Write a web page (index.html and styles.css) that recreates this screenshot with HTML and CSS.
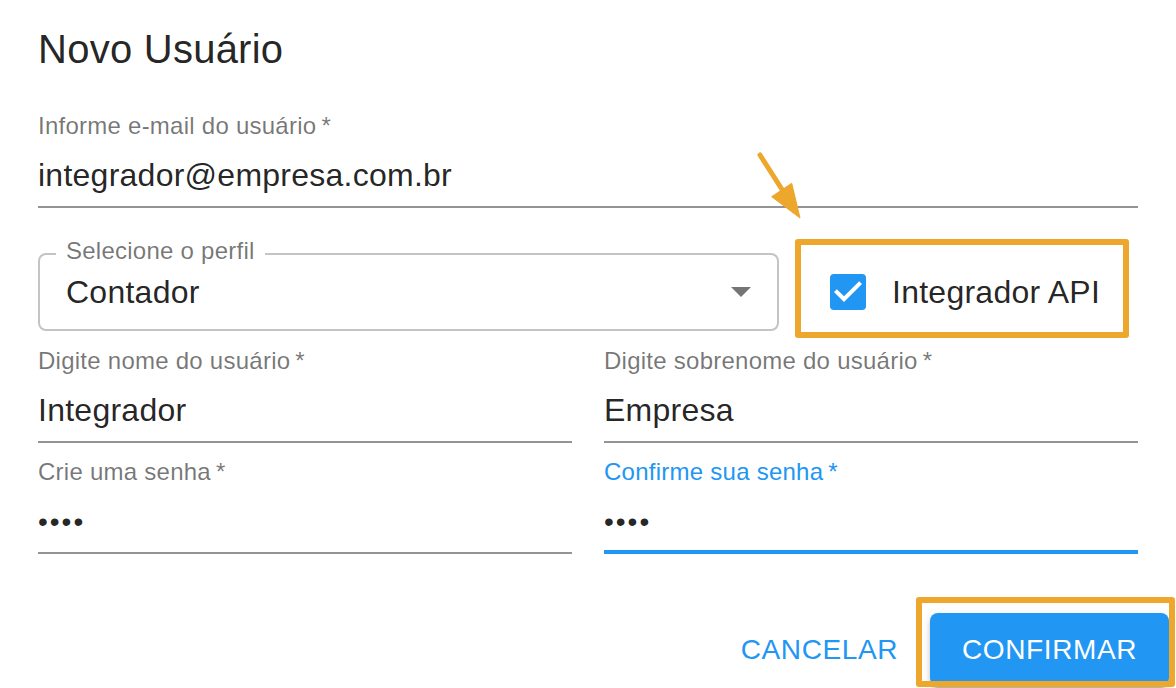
FILE: index.html
```html
<!DOCTYPE html>
<html lang="pt-BR">
<head>
<meta charset="utf-8">
<title>Novo Usuário</title>
<link rel="stylesheet" href="styles.css">
</head>
<body>
<div class="dialog">
  <svg class="arrow" viewBox="0 0 56 76" width="56" height="76" aria-hidden="true">
    <line x1="8" y1="7" x2="31" y2="43" stroke="#eca72c" stroke-width="5" stroke-linecap="round"/>
    <polygon points="48,70 19.7,48.7 39.7,35.3" fill="#eca72c" stroke="#eca72c" stroke-width="1" stroke-linejoin="round"/>
  </svg>

  <h2 class="title">Novo Usuário</h2>

  <div class="field field-email">
    <span class="field-label">Informe e-mail do usuário&thinsp;*</span>
    <span class="field-value">integrador@empresa.com.br</span>
  </div>

  <div class="select-row">
    <div class="select">
      <span class="select-label">Selecione o perfil</span>
      <span class="select-value">Contador</span>
      <svg class="caret" viewBox="0 0 20 10" width="20" height="10" aria-hidden="true"><path d="M0 0 L10 10 L20 0 Z" fill="#757575"/></svg>
    </div>
    <div class="api-check">
      <svg class="checkbox" viewBox="3 3 18 18" width="36" height="36" aria-hidden="true">
        <rect x="3" y="3" width="18" height="18" rx="2" fill="#2196f3"/>
        <path d="M10 17l-5-5 1.41-1.41L10 14.17l7.59-7.59L19 8l-9 9z" fill="#fff"/>
      </svg>
      <span class="check-label">Integrador API</span>
    </div>
  </div>

  <div class="grid">
    <div class="field">
      <span class="field-label">Digite nome do usuário&thinsp;*</span>
      <span class="field-value">Integrador</span>
    </div>
    <div class="field">
      <span class="field-label">Digite sobrenome do usuário&thinsp;*</span>
      <span class="field-value">Empresa</span>
    </div>
    <div class="field">
      <span class="field-label">Crie uma senha&thinsp;*</span>
      <span class="field-value"><span class="dots">••••</span></span>
    </div>
    <div class="field focused">
      <span class="field-label">Confirme sua senha&thinsp;*</span>
      <span class="field-value"><span class="dots">••••</span></span>
    </div>
  </div>

  <div class="actions">
    <button class="btn btn-text" type="button">Cancelar</button>
    <div class="btn-primary-wrap">
      <button class="btn btn-primary" type="button">Confirmar</button>
    </div>
  </div>
</div>
</body>
</html>
```

FILE: styles.css
```css
html, body {
  margin: 0;
  height: 100%;
  overflow: hidden;
  background: #fff;
}

body {
  font-family: "Liberation Sans", Arial, Helvetica, sans-serif;
  color: rgba(0, 0, 0, 0.87);
  letter-spacing: 0.25px;
}

.dialog {
  position: relative;
  width: 1176px;
  box-sizing: border-box;
  padding: 25px 38px 0 38px;
}

.arrow {
  position: absolute;
  left: 752px;
  top: 148px;
}

.title {
  margin: 0;
  font-size: 40px;
  line-height: 48px;
  font-weight: 400;
}

.field {
  display: flex;
  flex-direction: column;
  border-bottom: 2px solid #949494;
  padding-bottom: 12px;
}

.field-email {
  margin-top: 41px;
}

.field-label {
  font-size: 24px;
  line-height: 24px;
  color: rgba(0, 0, 0, 0.54);
  white-space: nowrap;
}

.field-value {
  margin-top: 18px;
  font-size: 32px;
  line-height: 38px;
  height: 38px;
  white-space: nowrap;
}

.dots {
  font-size: 28px;
  letter-spacing: 2px;
  position: relative;
  top: -1px;
}

.field.focused {
  border-bottom: 4px solid #2196f3;
  padding-bottom: 10px;
}

.field.focused .field-label {
  color: #2196f3;
}

.select-row {
  display: flex;
  margin-top: 45px;
}

.select {
  position: relative;
  width: 741px;
  height: 78px;
  box-sizing: border-box;
  border: 2px solid #c4c4c4;
  border-radius: 8px;
  padding: 18px 26px;
  display: flex;
  align-items: center;
}

.select-label {
  position: absolute;
  top: -16px;
  left: 16px;
  padding: 0 10px;
  background: #fff;
  font-size: 24px;
  line-height: 24px;
  color: rgba(0, 0, 0, 0.54);
  white-space: nowrap;
}

.select-value {
  flex: 1;
  font-size: 32px;
  line-height: 38px;
}

.caret {
  flex: none;
  display: block;
}

.api-check {
  box-sizing: border-box;
  width: 334px;
  height: 99px;
  margin: -14px 0 -7px 16px;
  border: 6px solid #eca72c;
  border-radius: 3px;
  padding: 28px 0 0 29px;
  display: flex;
  align-items: flex-start;
}

.checkbox {
  flex: none;
  display: block;
  margin-top: 1px;
}

.check-label {
  margin-left: 26px;
  font-size: 32px;
  line-height: 38px;
  white-space: nowrap;
}

.grid {
  display: grid;
  grid-template-columns: 1fr 1fr;
  column-gap: 32px;
  row-gap: 17px;
  margin-top: 18px;
}

.actions {
  display: flex;
  justify-content: flex-end;
  gap: 16px;
  margin: 59px -31px 0 0;
}

.btn {
  font-family: inherit;
  font-size: 28px;
  line-height: 49px;
  letter-spacing: 0.6px;
  text-transform: uppercase;
  padding: 12px 16px;
  border: 0;
  border-radius: 8px;
  background: none;
  color: #2196f3;
  cursor: pointer;
}

.btn-primary-wrap {
  position: relative;
}

.btn-primary {
  display: block;
  padding: 12px 32px;
  background: #2196f3;
  color: #fff;
  box-shadow: 0 6px 2px -4px rgba(0, 0, 0, 0.2), 0 4px 4px 0 rgba(0, 0, 0, 0.14), 0 2px 10px 0 rgba(0, 0, 0, 0.12);
}

.btn-primary-wrap::after {
  content: "";
  position: absolute;
  top: -16px;
  left: -14px;
  right: -6px;
  bottom: -1px;
  border: 6px solid #eca72c;
  border-radius: 3px;
  pointer-events: none;
}
```
